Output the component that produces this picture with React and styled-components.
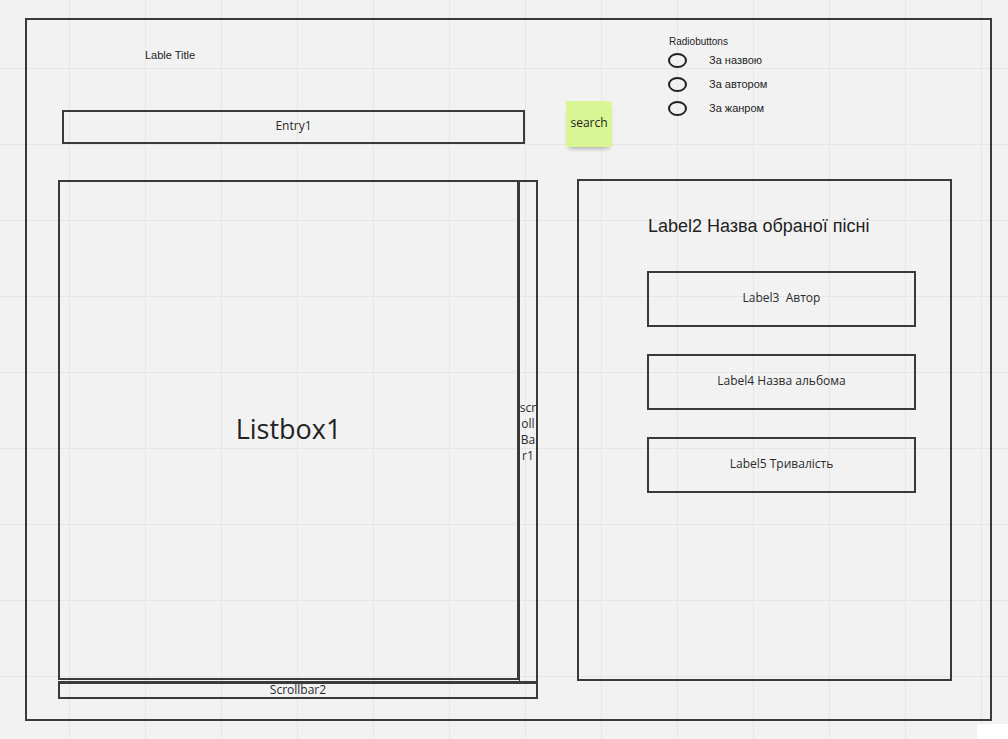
import React from 'react';
import styled, { createGlobalStyle } from 'styled-components';

const GlobalStyle = createGlobalStyle`
  html, body {
    margin: 0;
    padding: 0;
  }
  body {
    width: 1008px;
    height: 739px;
    overflow: hidden;
    background-color: #f2f2f2;
    background-image:
      linear-gradient(to right, #e6e6e6 1px, transparent 1px),
      linear-gradient(to bottom, #e6e6e6 1px, transparent 1px);
    background-size: 76px 76px;
    background-position: 69px 0, 0 68px;
    font-family: "Liberation Sans", Arial, sans-serif;
    color: #1e1e1e;
  }
`;

const Canvas = styled.div`
  padding: 18px 0 0 25px;
`;

const Frame = styled.div`
  box-sizing: border-box;
  width: 967px;
  height: 703px;
  border: 2px solid #3a3a3a;
  display: flex;
  flex-direction: column;
`;

const TopRow = styled.div`
  height: 159px;
  display: flex;
  align-items: flex-start;
  padding-left: 35px;
`;

const TitleColumn = styled.div`
  width: 463px;
  display: flex;
  flex-direction: column;
`;

const Title = styled.div`
  margin: 29px 0 0 83px;
  font-size: 11px;
  line-height: 13px;
`;

const Entry = styled.div`
  box-sizing: border-box;
  margin-top: 48px;
  height: 34px;
  padding-bottom: 2px;
  border: 2px solid #3a3a3a;
  display: flex;
  align-items: center;
  justify-content: center;
  font-family: "Open Sans", sans-serif;
  font-size: 12px;
  line-height: 16px;
  color: #2a2a2a;
`;

const Sticky = styled.div`
  box-sizing: border-box;
  margin: 81px 0 0 41px;
  width: 46px;
  height: 46px;
  padding-bottom: 3px;
  background: linear-gradient(225deg, #e4fab0 0, #d8f794 5px, #d8f794 100%);
  box-shadow: 0 4px 5px -3px rgba(0, 0, 0, 0.35);
  display: flex;
  align-items: center;
  justify-content: center;
  font-family: "Open Sans", sans-serif;
  font-size: 12px;
  line-height: 16px;
  color: #1e1e1e;
`;

const RadioGroup = styled.div`
  margin: 16px 0 0 56px;
  display: flex;
  flex-direction: column;
`;

const RadioHeading = styled.div`
  font-size: 10px;
  line-height: 12px;
  margin-left: 1px;
`;

const RadioRow = styled.div`
  height: 24px;
  display: flex;
  align-items: center;
`;

const RadioCircle = styled.span`
  box-sizing: border-box;
  width: 19px;
  height: 15px;
  border: 2px solid #222;
  border-radius: 50%;
`;

const RadioText = styled.span`
  margin-left: 22px;
  font-size: 11px;
`;

const BottomRow = styled.div`
  display: flex;
  align-items: flex-start;
  padding-left: 31px;
`;

const ListGroup = styled.div`
  margin-top: 1px;
  width: 480px;
  display: flex;
  flex-direction: column;
`;

const ListRow = styled.div`
  display: flex;
  height: 501px;
`;

const Listbox = styled.div`
  box-sizing: border-box;
  width: 461px;
  height: 500px;
  border: 2px solid #3a3a3a;
  display: flex;
  align-items: center;
  justify-content: center;
  font-family: "Open Sans", sans-serif;
  font-size: 27px;
  color: #222;
  padding-bottom: 4px;
`;

const VScroll = styled.div`
  box-sizing: border-box;
  width: 19px;
  height: 501px;
  border: 2px solid #3a3a3a;
  border-left-width: 1px;
  border-bottom: none;
  display: flex;
  align-items: center;
  justify-content: center;
`;

const VScrollText = styled.span`
  flex: none;
  width: 17.5px;
  text-align: center;
  word-break: break-all;
  font-family: "Open Sans", sans-serif;
  font-size: 12px;
  line-height: 16px;
  color: #2a2a2a;
`;

const HScroll = styled.div`
  box-sizing: border-box;
  height: 18px;
  border: 2px solid #3a3a3a;
  border-top-width: 3px;
  display: flex;
  align-items: center;
  justify-content: center;
  font-family: "Open Sans", sans-serif;
  font-size: 12px;
  line-height: 12px;
  padding-bottom: 2px;
  color: #2a2a2a;
`;

const DetailsPanel = styled.div`
  box-sizing: border-box;
  margin-left: 39px;
  width: 375px;
  height: 502px;
  border: 2px solid #3a3a3a;
  display: flex;
  flex-direction: column;
  padding: 34px 0 0 68px;
`;

const SongTitle = styled.div`
  margin-left: 1px;
  font-size: 18px;
  line-height: 22px;
  color: #222;
`;

const InfoList = styled.div`
  margin-top: 34px;
  display: flex;
  flex-direction: column;
  gap: 27px;
`;

const InfoBox = styled.div`
  box-sizing: border-box;
  width: 269px;
  height: 56px;
  padding-bottom: 3px;
  border: 2px solid #3a3a3a;
  display: flex;
  align-items: center;
  justify-content: center;
  font-family: "Open Sans", sans-serif;
  font-size: 12px;
  line-height: 16px;
  color: #2a2a2a;
  white-space: pre;
`;

const Corner = styled.div`
  position: fixed;
  right: 0;
  bottom: 0;
  width: 31px;
  height: 15px;
  background: #fff;
  border-top-left-radius: 3px;
`;

const options = ['За назвою', 'За автором', 'За жанром'];
const labels = ['Label3  Автор', 'Label4 Назва альбома', 'Label5 Тривалість'];

export default function App() {
  return (
    <>
      <GlobalStyle />
      <Canvas>
        <Frame>
          <TopRow>
            <TitleColumn>
              <Title>Lable Title</Title>
              <Entry>Entry1</Entry>
            </TitleColumn>
            <Sticky>search</Sticky>
            <RadioGroup>
              <RadioHeading>Radiobuttons</RadioHeading>
              {options.map((o) => (
                <RadioRow key={o}>
                  <RadioCircle />
                  <RadioText>{o}</RadioText>
                </RadioRow>
              ))}
            </RadioGroup>
          </TopRow>
          <BottomRow>
            <ListGroup>
              <ListRow>
                <Listbox>Listbox1</Listbox>
                <VScroll>
                  <VScrollText>scrollBar1</VScrollText>
                </VScroll>
              </ListRow>
              <HScroll>Scrollbar2</HScroll>
            </ListGroup>
            <DetailsPanel>
              <SongTitle>Label2 Назва обраної пісні</SongTitle>
              <InfoList>
                {labels.map((l) => (
                  <InfoBox key={l}>{l}</InfoBox>
                ))}
              </InfoList>
            </DetailsPanel>
          </BottomRow>
        </Frame>
      </Canvas>
      <Corner />
    </>
  );
}
